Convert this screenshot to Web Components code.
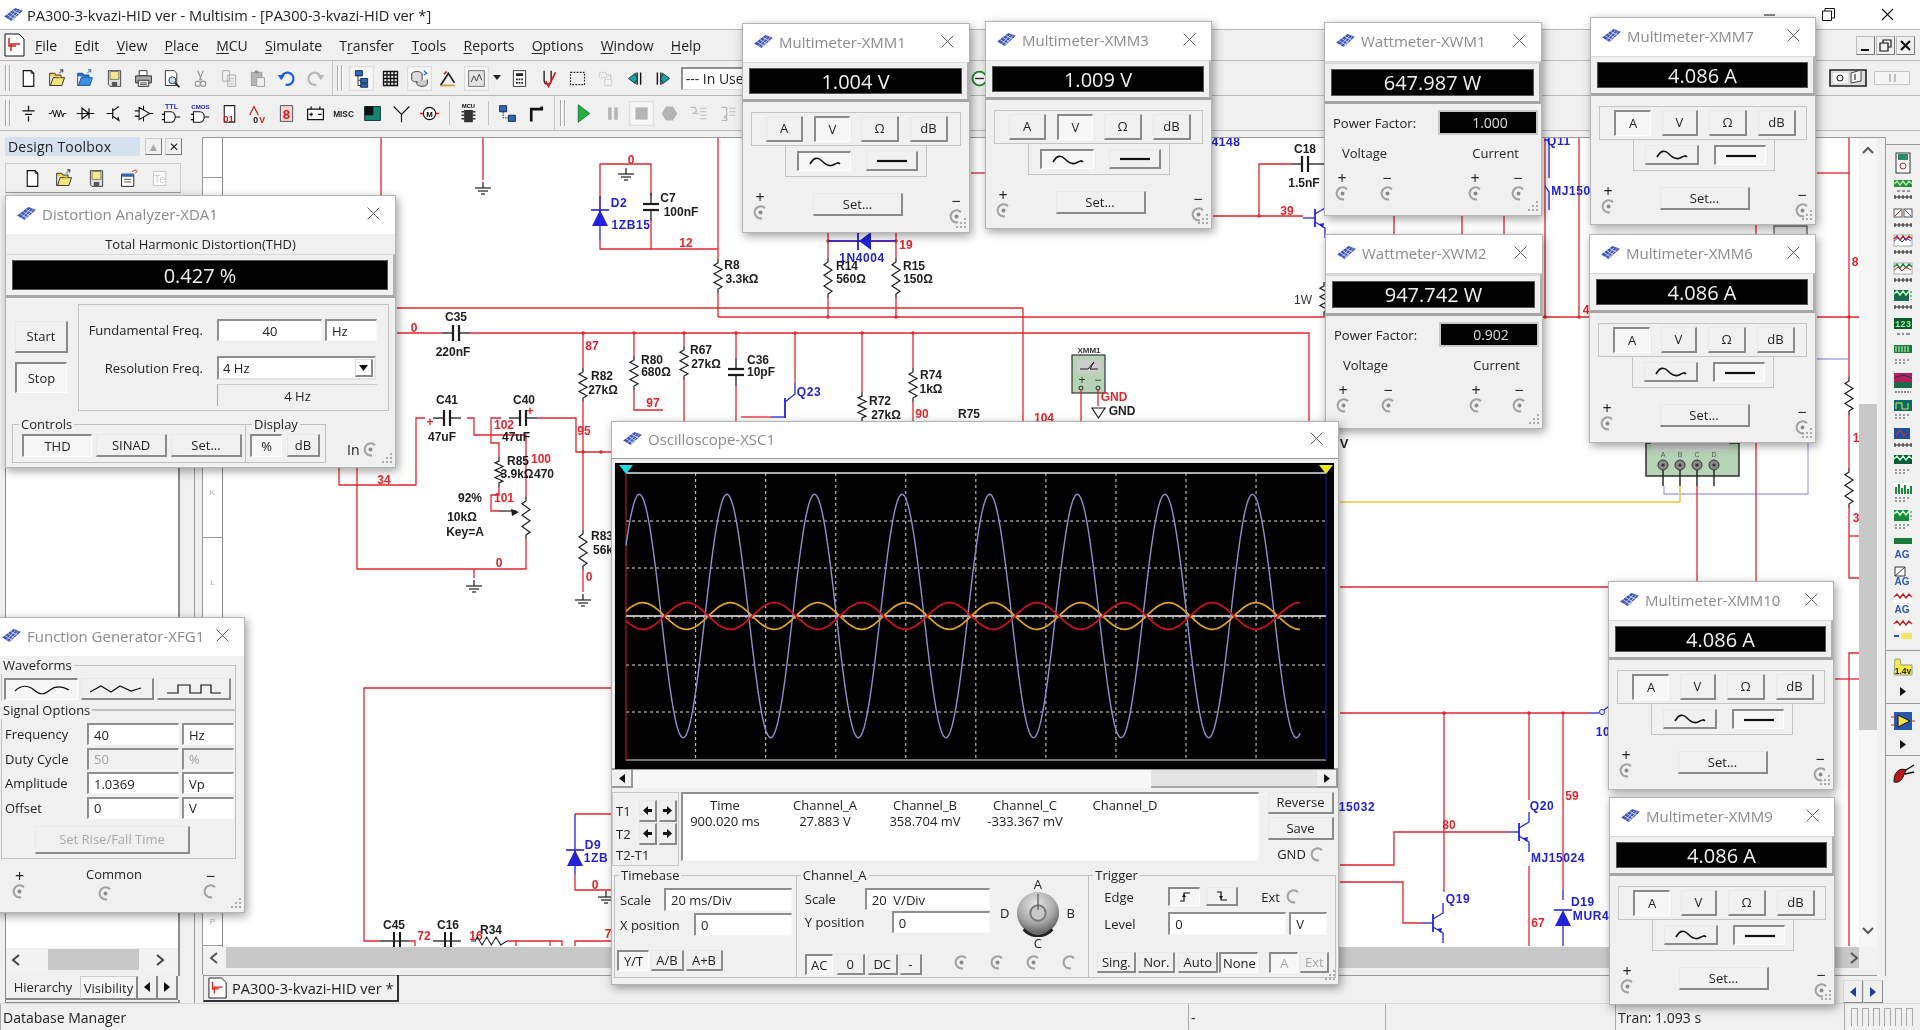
<!DOCTYPE html>
<html lang="en">
<head>
<meta charset="utf-8">
<title>Multisim</title>
<style>
  html, body { margin: 0; padding: 0; background: #f0f0f0; overflow: hidden; }
  body { font-family: "Open Sans", "Noto Sans", sans-serif; font-size: 13px; color: #222; }
</style>
</head>
<body>
<ms-app>
  <ms-titlebar text="PA300-3-kvazi-HID ver - Multisim - [PA300-3-kvazi-HID ver *]"></ms-titlebar>
  <ms-menubar></ms-menubar>
  <ms-toolbar-main></ms-toolbar-main>
  <ms-toolbar-parts></ms-toolbar-parts>
  <ms-main></ms-main>
  <ms-tabs></ms-tabs>
  <ms-statusbar></ms-statusbar>

  <ms-distortion x="5" y="195" w="391" h="273" name="Distortion Analyzer-XDA1"></ms-distortion>
  <ms-funcgen x="-5" y="617" w="250" h="296" name="Function Generator-XFG1"></ms-funcgen>
  <ms-multimeter x="742" y="23" w="228" h="210" name="Multimeter-XMM1" value="1.004 V" mode="V" cur="ac"></ms-multimeter>
  <ms-multimeter x="985" y="21" w="227" h="208" name="Multimeter-XMM3" value="1.009 V" mode="V" cur="ac"></ms-multimeter>
  <ms-wattmeter x="1324" y="22" w="218" h="194" name="Wattmeter-XWM1" value="647.987 W" pf="1.000"></ms-wattmeter>
  <ms-wattmeter x="1325" y="234" w="218" h="195" name="Wattmeter-XWM2" value="947.742 W" pf="0.902"></ms-wattmeter>
  <ms-multimeter x="1590" y="17" w="226" h="208" name="Multimeter-XMM7" value="4.086 A" mode="A" cur="dc"></ms-multimeter>
  <ms-multimeter x="1589" y="234" w="227" h="209" name="Multimeter-XMM6" value="4.086 A" mode="A" cur="dc"></ms-multimeter>
  <ms-multimeter x="1608" y="581" w="226" h="209" name="Multimeter-XMM10" value="4.086 A" mode="A" cur="dc"></ms-multimeter>
  <ms-multimeter x="1609" y="797" w="226" h="208" name="Multimeter-XMM9" value="4.086 A" mode="A" cur="dc"></ms-multimeter>
  <ms-scope x="611" y="421" w="728" h="564" name="Oscilloscope-XSC1"></ms-scope>
</ms-app>

<script>
class Base extends HTMLElement {
    constructor() {
        super();
        this.attachShadow({ mode: "open" });
    }
    connectedCallback() {
        this.shadowRoot.innerHTML = this.html();
    }
    html() { return ""; }
}

// helpers for the small controls
const btn = (t, w, h, p) => `<ms-btn style="width:${w}px;height:${h}px" ${p ? "pressed" : ""}>${t}</ms-btn>`;
const fld = (t, w, h, extra = "") => `<ms-field style="width:${w}px;height:${h}px" ${extra}>${t}</ms-field>`;
const SINE = `<svg width="32" height="12" viewBox="0 0 32 12"><path d="M1 8C5 1 9 1 13 5S20 11 24 9 29 6 31 8" fill="none" stroke="#111" stroke-width="1.6"/></svg>`;
const LINE = `<svg width="34" height="6" viewBox="0 0 34 6"><path d="M2 3H32" stroke="#111" stroke-width="2.2"/></svg>`;

class MsBtn extends Base {
    html() {
        return `<style>
:host { display: inline-flex; align-items: center; justify-content: center; box-sizing: border-box; flex: none;
  background: #f0f0f0; border-style: solid; border-width: 1px 2px 2px 1px; border-color: #e8e8e8 #8a8a8a #8a8a8a #e8e8e8;
  font-size: 13px; color: #222; line-height: 1; }
:host([pressed]) { border-width: 2px 1px 1px 2px; border-color: #8a8a8a #fff #fff #8a8a8a; background: #f6f6f6; }
:host([off]) { color: #a8a8a8; }
</style><slot></slot>`;
    }
}
customElements.define("ms-btn", MsBtn);

class MsField extends Base {
    html() {
        return `<style>
:host { display: inline-flex; align-items: center; box-sizing: border-box; flex: none; padding: 0 5px; overflow: hidden;
  background: #fff; border-style: solid; border-width: 2px 1px 1px 2px; border-color: #8f8f8f #f8f8f8 #f8f8f8 #8f8f8f;
  font-size: 13px; color: #222; white-space: nowrap; }
:host([center]) { justify-content: center; }
:host([off]) { background: #f0f0f0; color: #a0a0a0; }
</style><slot></slot>`;
    }
}
customElements.define("ms-field", MsField);

class MsTerm extends Base {
    html() {
        return `<style>:host { display: inline-block; width: 15px; height: 15px; flex: none; }</style>
<svg width="15" height="15" viewBox="0 0 15 15"><path d="M12 3.2A6 6 0 1 0 9 13.2" fill="none" stroke="#a2a2a2" stroke-width="2"/>
${this.hasAttribute("empty") ? "" : '<circle cx="7.5" cy="7.5" r="2" fill="#8a8a8a"/>'}</svg>`;
    }
}
customElements.define("ms-term", MsTerm);

class MsGroup extends Base {
    html() {
        return `<style>
:host { display: block; position: relative; box-sizing: border-box; border: 1px solid #c0c0c0; }
.leg { position: absolute; left: var(--leg-x, 6px); top: -10px; background: #f0f0f0; padding: 0 2px; font-size: 13px; line-height: 18px; white-space: nowrap; }
</style><div class="leg">${this.getAttribute("label") ?? ""}</div><slot></slot>`;
    }
}
customElements.define("ms-group", MsGroup);

class MsDisplay extends Base {
    html() {
        return `<style>
:host { display: block; box-sizing: border-box; padding: 5px 5px 5px 6px; border-top: 1px solid #d8d8d8; border-bottom: 3px solid #a6a6a6; border-right: 2px solid #b0b0b0; flex: none; }
.b { height: 100%; background: #000; color: #f2f2f2; display: flex; align-items: center; justify-content: center; font-size: 20px; border: 1px solid #555; box-sizing: border-box; }
</style><div class="b"><slot></slot></div>`;
    }
}
customElements.define("ms-display", MsDisplay);

/* ---------- toolbar icons ---------- */
const ICONS = {
    new: `<path d="M6 3H15L18 6V21H6Z" fill="#fff" stroke="#111" stroke-width="1.3"/><path d="M15 3V6H18" fill="none" stroke="#111"/>`,
    open: `<path d="M3 9V20H17L20 11H7L4 20" fill="#f5e27a" stroke="#222"/><path d="M3 9V6H9L10 8H16V11" fill="#f0d040" stroke="#222"/><path d="M14 6L18 2M15 2H18V5" fill="none" stroke="#222"/>`,
    openb: `<path d="M3 9V20H17L20 11H7L4 20" fill="#3a8fe0" stroke="#1a4f90"/><path d="M3 9V6H9L10 8H16V11" fill="#2070c8" stroke="#1a4f90"/><path d="M14 6L18 2M15 2H18V5" fill="none" stroke="#1a4f90"/>`,
    save: `<path d="M5 3H19V21H7L5 19Z" fill="#ddd" stroke="#333"/><path d="M7 4H17V13H7Z" fill="#f6e98a" stroke="#777"/><path d="M9 16H15V21H9Z" fill="#555"/>`,
    print: `<path d="M7 3H16V9H7Z" fill="#fff" stroke="#222"/><path d="M3 9H21V17H3Z" fill="#aaa" stroke="#222"/><path d="M6 14H18V21H6Z" fill="#eee" stroke="#222"/><path d="M8 17H16M8 19H16" stroke="#444"/>`,
    preview: `<path d="M5 3H15L18 6V20H5Z" fill="#fff" stroke="#222"/><circle cx="13" cy="14" r="4" fill="#bfe0f5" stroke="#222"/><path d="M16 17L21 22" stroke="#222" stroke-width="2"/>`,
    cut: `<path d="M9 3L13 14M15 3L11 14" stroke="#9a9a9a" stroke-width="1.4" fill="none"/><circle cx="9" cy="18" r="3" fill="none" stroke="#9a9a9a" stroke-width="1.4"/><circle cx="15" cy="18" r="3" fill="none" stroke="#9a9a9a" stroke-width="1.4"/>`,
    copy: `<path d="M4 3H12V15H4ZM10 8H19V21H10Z" fill="#eee" stroke="#a8a8a8"/><path d="M12 12H17M12 15H17M12 18H17" stroke="#bbb"/>`,
    paste: `<path d="M5 5H17V20H5Z" fill="#b4b4b4" stroke="#999"/><path d="M9 3H13V6H9Z" fill="#888"/><path d="M11 11H20V21H11Z" fill="#eee" stroke="#999"/>`,
    undo: `<path d="M6 12A7 7 0 1 1 11 19" fill="none" stroke="#1a5fe0" stroke-width="2.6"/><path d="M2 8H10L6 14Z" fill="#1a5fe0"/>`,
    redo: `<path d="M18 12A7 7 0 1 0 13 19" fill="none" stroke="#b8b8b8" stroke-width="2.6"/><path d="M22 8H14L18 14Z" fill="#b8b8b8"/>`,
    tree: `<path d="M5 3H13V9H5ZM11 12H19V17H11ZM11 18H19V22H11Z" fill="#2f66c0" stroke="#123"/><path d="M8 9V20H11M8 14H11" fill="none" stroke="#222"/>`,
    grid: `<path d="M4 4H20V20H4ZM4 8H20M4 12H20M4 16H20M8 4V20M12 4V20M16 4V20" fill="none" stroke="#111" stroke-width="1.5"/>`,
    db: `<ellipse cx="9" cy="7" rx="6" ry="3" fill="#ddd" stroke="#333"/><path d="M3 7V13A6 3 0 0 0 15 13V7" fill="#ddd" stroke="#333"/><path d="M9 15V18A6 3 0 0 0 21 18V13" fill="#ccc" stroke="#333"/><path d="M17 3L20 6L17 8" fill="none" stroke="#2060c0" stroke-width="1.4"/>`,
    post: `<path d="M4 20L13 6L20 17" fill="none" stroke="#222" stroke-width="2"/><path d="M4 19H20V21H4Z" fill="#c9a02a"/><path d="M8 7L11 4" stroke="#c02020" stroke-width="2"/>`,
    graph: `<path d="M3 3H21V21H3Z" fill="#e4e4e4" stroke="#666"/><path d="M6 16L9 9L12 15L15 7L18 14" fill="none" stroke="#333"/>`,
    calc: `<path d="M5 3H19V21H5Z" fill="#fff" stroke="#222"/><path d="M8 6H16V9H8ZM8 12H10V14H8ZM11 12H13V14H11ZM14 12H16V14H14ZM8 16H10V18H8ZM11 16H13V18H11ZM14 16H16V18H14Z" fill="#222"/>`,
    erc: `<path d="M7 3V14C7 20 15 20 15 14V3" fill="none" stroke="#222" stroke-width="1.6"/><path d="M9 15L12 21L20 5" fill="none" stroke="#e01818" stroke-width="2"/>`,
    dash: `<path d="M4 5H20V19H4Z" fill="none" stroke="#222" stroke-dasharray="2 1.5" stroke-width="1.3"/>`,
    cross: `<path d="M5 5H13V11H5ZM11 13H19V20H11Z" fill="none" stroke="#bbb" stroke-dasharray="2 1"/><path d="M14 8H18V12" fill="none" stroke="#bbb"/>`,
    back: `<path d="M15 5V19M19 5V19" stroke="#111" stroke-width="1.6"/><path d="M13 6L5 12L13 18V15H15V9H13Z" fill="#1aa0a0" stroke="#134"/>`,
    fwd: `<path d="M5 5V19M9 5V19" stroke="#111" stroke-width="1.6"/><path d="M11 6L19 12L11 18V15H9V9H11Z" fill="#1aa0a0" stroke="#134"/>`,
    source: `<path d="M12 3V9M12 15V21M5 9H19M8 13H16" stroke="#111" stroke-width="1.4" fill="none"/>`,
    basic: `<path d="M2 12H5L6.5 8L9 16L11 8L13.5 16L15.5 8L18 16L19 12H22" fill="none" stroke="#111" stroke-width="1.1"/>`,
    diode: `<path d="M2 12H22M8 6V18L16 12ZM16 6V18" fill="none" stroke="#111" stroke-width="1.4"/>`,
    trans: `<path d="M10 6V18M3 12H10M10 9L17 4M10 15L17 20M13 17L17 20L16 16" fill="none" stroke="#111" stroke-width="1.4"/>`,
    analog: `<path d="M7 5V19L19 12ZM2 9H7M2 15H7M19 12H23M12 3V8M12 16V21" fill="none" stroke="#111" stroke-width="1.2"/>`,
    ttl: `<path d="M4 10H11C18 10 18 22 11 22H4ZM1 13H4M1 19H4M16 16H22" fill="#fff" stroke="#111" stroke-width="1.2"/><text x="12" y="7" font-size="8" text-anchor="middle" font-family="Liberation Sans" font-weight="700" fill="#2323c8">TTL</text>`,
    cmos: `<path d="M4 10H11C18 10 18 22 11 22H4ZM1 13H4M1 19H4M16 16H22" fill="#fff" stroke="#111" stroke-width="1.2"/><text x="12" y="7" font-size="7" text-anchor="middle" font-family="Liberation Sans" font-weight="700" fill="#2323c8">CMOS</text>`,
    misc: `<path d="M6 3H18V22H6Z" fill="#fff" stroke="#222" stroke-width="1.3"/><text x="11" y="22" font-size="11" text-anchor="middle" font-family="Liberation Sans" font-weight="700" fill="#d01818">01</text>`,
    mixed: `<path d="M3 14L8 4L13 14" fill="none" stroke="#d01818" stroke-width="1.4"/><text x="7" y="23" font-size="10" font-family="Liberation Sans" font-weight="700" fill="#111">0</text><text x="14" y="23" font-size="10" font-family="Liberation Sans" font-weight="700" fill="#d01818">V</text>`,
    seg: `<path d="M5 3H19V21H5Z" fill="#f8d8d8" stroke="#444"/><text x="12" y="18" font-size="15" text-anchor="middle" font-family="Liberation Mono" font-weight="700" fill="#d01818">8</text>`,
    power: `<path d="M3 7H21V19H3Z" fill="#fff" stroke="#111" stroke-width="1.4"/><path d="M7 7V4M17 7V4M7 11V15M5 13H9M15 13H19" stroke="#111" stroke-width="1.4"/>`,
    misctxt: `<text x="12" y="16" font-size="9.5" text-anchor="middle" font-family="Liberation Sans" font-weight="700" fill="#222">MISC</text>`,
    adv: `<path d="M3 4H21V20H3Z" fill="#14866e" stroke="#123"/><path d="M3 4H13V14H3Z" fill="#111"/>`,
    rf: `<path d="M3 4L12 13L21 4M12 13V22" fill="none" stroke="#111" stroke-width="1.3"/>`,
    motor: `<circle cx="12" cy="12" r="7" fill="#fff" stroke="#111" stroke-width="1.3"/><path d="M1 12H5M19 12H23" stroke="#d01818" stroke-width="1.6"/><text x="12" y="15.5" font-size="9" text-anchor="middle" font-family="Liberation Sans" font-weight="700">M</text>`,
    mcu: `<path d="M7 8H17V22H7Z" fill="#333"/><path d="M4 10H7M4 14H7M4 18H7M17 10H20M17 14H20M17 18H20" stroke="#333" stroke-width="1.6"/><text x="12" y="6" font-size="6.5" text-anchor="middle" font-family="Liberation Sans" font-weight="700">MCU</text>`,
    hier: `<path d="M3 3H11V10H3ZM13 14H21V21H13Z" fill="#2f66c0" stroke="#123"/><path d="M7 10V17H13" fill="none" stroke="#222" stroke-dasharray="2 1"/>`,
    connector: `<path d="M6 21V7H18V4" fill="none" stroke="#111" stroke-width="3"/>`,
    run: `<path d="M6 2L19 12L6 22Z" fill="#22b040" stroke="#127028"/>`,
    pause: `<path d="M7 5H11V19H7ZM14 5H18V19H14Z" fill="#b4b4b4"/>`,
    stop: `<path d="M5 5H19V19H5Z" fill="#b4b4b4"/>`,
    probe: `<path d="M8 4H16L21 12L16 20H8L3 12Z" fill="#b4b4b4"/>`,
    step1: `<path d="M3 5H8L10 9L6 12H12M14 6H21M14 10H21M14 14H21M14 18H21" fill="none" stroke="#bbb" stroke-width="1.4"/>`,
    step2: `<path d="M5 5H11V20H5M12 12L8 16L12 19M14 6H21M14 10H21M14 14H21" fill="none" stroke="#bbb" stroke-width="1.4"/>`,
    minus: `<circle cx="12" cy="12" r="8" fill="#fff" stroke="#1b8a30" stroke-width="2"/><path d="M7 12H17" stroke="#222" stroke-width="1.5"/>`,
    tcol: `<path d="M4 4H18V20H4Z" fill="#fff" stroke="#c0c0c0"/><text x="11" y="17" font-size="13" text-anchor="middle" font-family="Liberation Sans" fill="#c8c8c8">Te</text>`,
    win: `<path d="M4 7H18V21H4Z" fill="#fff" stroke="#111"/><path d="M4 7H18V10H4Z" fill="#2f66c0"/><path d="M7 13H15M7 16H15" stroke="#444"/><path d="M16 4L21 2M20 6L22 3" stroke="#d01818"/>`
};

class MsIcon extends Base {
    html() {
        const s = this.getAttribute("size") ?? 21;
        return `<style>:host { display: inline-flex; align-items: center; justify-content: center; width: var(--slot, 28.7px); height: 26px; flex: none; }
:host([boxed]) svg { background: #f6f6f6; outline: 1px solid #ddd; outline-offset: 1px; }</style>
<svg width="${s}" height="${s}" viewBox="0 0 24 24">${ICONS[this.getAttribute("name")] ?? ""}</svg>`;
    }
}
customElements.define("ms-icon", MsIcon);

const icons = list => list.split(" ").map(n => n.startsWith("!") ? `<ms-icon name="${n.slice(1)}" boxed></ms-icon>` : `<ms-icon name="${n}"></ms-icon>`).join("");

/* ---------- shell ---------- */
class MsApp extends Base {
    html() {
        return `<style>:host { display: flex; flex-direction: column; position: relative; width: 1920px; height: 1030px; overflow: hidden; background: #f0f0f0; filter: blur(.35px); }</style><slot></slot>`;
    }
}
customElements.define("ms-app", MsApp);

const LOGO = `<svg width="21" height="15" viewBox="0 0 22 16"><path d="M1 10L13 1L21 4L9 15Z" fill="#3f56b8"/><path d="M4 8L12 13M7 5.8L15 11M10 3.5L18 8M6 12.5L15 3M9 14L18 3.6" stroke="#e8ecff" stroke-width=".8"/></svg>`;

class MsTitlebar extends Base {
    html() {
        return `<style>
:host { display: flex; align-items: center; height: 29px; background: #fff; border-bottom: 1px solid #b8b8b8; flex: none; font-size: 14.6px; color: #222; }
.logo { display: flex; width: 27px; padding-left: 3px; box-sizing: border-box; }
.ctl { margin-left: auto; display: flex; padding-right: 3px; }
.ctl div { width: 59px; display: flex; align-items: center; justify-content: center; height: 29px; }
</style><div class="logo">${LOGO}</div><span>${this.getAttribute("text")}</span>
<div class="ctl">
<div><svg width="12" height="12"><path d="M0 6H11" stroke="#111"/></svg></div>
<div><svg width="13" height="13"><path d="M.5 3H9.5V12.5H.5ZM3 3V.5H12.5V10H9.5" fill="none" stroke="#111"/></svg></div>
<div><svg width="13" height="13"><path d="M1 1L12 12M12 1L1 12" stroke="#111" stroke-width="1.1"/></svg></div>
</div>`;
    }
}
customElements.define("ms-titlebar", MsTitlebar);

class MsMenubar extends Base {
    html() {
        const items = [["F", "ile"], ["E", "dit"], ["V", "iew"], ["P", "lace"], ["M", "CU"], ["S", "imulate"],
            ["Tr", "ansfer", 1], ["T", "ools"], ["R", "eports"], ["O", "ptions"], ["W", "indow"], ["H", "elp"]];
        const html = items.map(i => i[2] ? `<span>T<u>r</u>ansfer</span>` : `<span><u>${i[0]}</u>${i[1]}</span>`).join("");
        const doc = `<svg width="22" height="24" viewBox="0 0 22 24"><path d="M1 1H15L20 6V23H1Z" fill="#fff" stroke="#111"/><path d="M5 5V13H12M16 11H7V18" fill="none" stroke="#d02020" stroke-width="1.5"/></svg>`;
        return `<style>
:host { display: flex; align-items: center; height: 30px; padding-left: 4px; border-bottom: 1px solid #b8b8b8; flex: none; font-size: 14px; color: #222; }
.doc { display: flex; width: 31px; }
nav { display: flex; gap: 17.3px; }
u { text-underline-offset: 2px; }
.mdi { margin-left: auto; display: flex; gap: 1px; padding-right: 5px; }
.mdi div { width: 19px; height: 19px; box-sizing: border-box; border: 1px solid #bbb; border-right-color: #777; border-bottom-color: #777; display: flex; align-items: center; justify-content: center; }
</style><div class="doc">${doc}</div><nav>${html}</nav>
<div class="mdi">
<div><svg width="13" height="13"><path d="M2 11H10" stroke="#111" stroke-width="2"/></svg></div>
<div><svg width="13" height="13"><path d="M1 4H9V12H1ZM4 4V1H12V8H9" fill="none" stroke="#111" stroke-width="1.2"/></svg></div>
<div><svg width="13" height="13"><path d="M2 2L11 11M11 2L2 11" stroke="#111" stroke-width="2.2"/></svg></div>
</div>`;
    }
}
customElements.define("ms-menubar", MsMenubar);

const GRIP = `<svg width="8" height="28" style="flex:none"><path d="M1.5 1V27M5.5 1V27" stroke="#a8a8a8"/><path d="M2.5 1V27M6.5 1V27" stroke="#fff"/></svg>`;

class MsToolbarMain extends Base {
    html() {
        return `<style>
:host { display: flex; align-items: center; height: 34px; padding-left: 4px; border-bottom: 1px solid #b8b8b8; flex: none; }
.gap { width: 2px; flex: none; }
.sep { display: flex; align-items: center; height: 100%; padding: 0 4px 0 3px; border-left: 1px solid #c4c4c4; margin-left: 2px; }
.combo { width: 285px; height: 23px; margin: 0 0 0 3px; box-sizing: border-box; background: #fff; border: 2px solid #8f8f8f; border-right: 0; border-bottom: 1px solid #ddd; font-size: 14px; padding-left: 3px; line-height: 19px; white-space: nowrap; overflow: hidden; flex: none; }
.right { margin-left: auto; display: flex; gap: 7px; padding-right: 10px; align-items: center; }
</style>${GRIP}<div class="gap"></div>${icons("new open openb save print preview cut copy paste undo redo")}
<div class="sep">${GRIP}</div>${icons("!tree grid !db post !graph")}
<svg width="8" height="6" style="margin:0 4.500px 0 2px;flex:none"><path d="M0 0H8L4 5Z" fill="#222"/></svg>
${icons("calc erc dash cross back fwd")}
<div class="combo">--- In Use List ---</div>${icons("minus")}
<div class="right">
<svg width="38" height="18" viewBox="0 0 38 18"><path d="M1 1H37V17H1Z" fill="#ddd" stroke="#222" stroke-width="1.6"/><path d="M4 4H19V14H4Z" fill="#fff"/><circle cx="11" cy="9" r="3" fill="none" stroke="#111"/><path d="M22 14V4L32 1V12Z" fill="#f4f4f4" stroke="#444"/><path d="M26 5V11" stroke="#111"/></svg>
<svg width="36" height="14" viewBox="0 0 36 14"><path d="M.5 .5H35.5V13.5H.5Z" fill="#f4f4f4" stroke="#c4c4c4"/><path d="M16 3V11M21 3V11" stroke="#bbb" stroke-width="2"/></svg>
</div>`;
    }
}
customElements.define("ms-toolbar-main", MsToolbarMain);

class MsToolbarParts extends Base {
    html() {
        return `<style>
:host { display: flex; align-items: center; height: 34px; padding-left: 4px; border-bottom: 1px solid #b8b8b8; flex: none; }
.gap { width: 2px; flex: none; }
.sep { width: 1px; height: 24px; background: #c0c0c0; margin: 0 4.500px; flex: none; }
.edge { width: 1px; height: 100%; background: #c4c4c4; margin: 0 4px 0 4px; }
</style>${GRIP}<div class="gap"></div>${icons("source basic diode trans analog ttl cmos misc mixed seg power misctxt adv rf motor")}
<div class="sep"></div>${icons("mcu")}<div class="sep"></div>${icons("hier connector")}
<div class="edge"></div>${GRIP}<div class="gap"></div>${icons("run pause !stop probe step1 step2")}`;
    }
}
customElements.define("ms-toolbar-parts", MsToolbarParts);

class MsMain extends Base {
    html() {
        return `<style>:host { display: flex; flex: 1; min-height: 0; padding-top: 6px; }</style>
<ms-toolbox></ms-toolbox><ms-workspace></ms-workspace><ms-rightbar></ms-rightbar>`;
    }
}
customElements.define("ms-main", MsMain);

class MsToolbox extends Base {
    html() {
        return `<style>
/* the panel runs down past the workspace, next to the document tabs */
:host { display: flex; flex-direction: column; width: 202px; flex: none; padding-left: 5px; box-sizing: border-box; margin-bottom: -28px; z-index: 1; }
.head { display: flex; align-items: center; gap: 3px; height: 19px; flex: none; }
.head b { font-weight: 400; font-size: 14px; background: #d5e1ef; width: 135px; height: 19px; line-height: 19px; padding-left: 3px; box-sizing: border-box; margin-right: 2px; white-space: nowrap; letter-spacing: .2px; }
.head span { width: 17px; height: 17px; box-sizing: border-box; border: 1px solid #ccc; border-right-color: #777; border-bottom-color: #777; font-size: 12px; display: flex; align-items: center; justify-content: center; }
.tools { display: flex; height: 30px; margin: 7px 0 0; width: 176px; box-sizing: border-box; border: 1px solid #ccc; border-bottom-color: #999; align-items: center; padding-left: 10px; --slot: 32px; flex: none; }
.body { flex: 1; display: flex; min-height: 0; margin-top: 3px; }
.tree { width: 175px; display: flex; flex-direction: column; border-right: 2px solid #8c8c8c; border-left: 1px solid #8c8c8c; box-sizing: border-box; border-bottom: 1px solid #8c8c8c; }
.white { flex: 1; background: #fff; }
.scroll { height: 21px; display: flex; align-items: center; background: #f2f2f2; font-size: 18px; color: #444; flex: none; margin-bottom: 6px; border-top: 1px solid #eee; }
.scroll i { width: 91px; height: 100%; background: #c8c8c8; margin: 0 12px 0 24px; }
.scroll span { width: 18px; padding-left: 5px; box-sizing: border-box; display: flex; }
.tabs { display: flex; height: 24px; flex: none; margin: 0 -22px 2px 0; font-size: 13px; align-items: center; background: #f0f0f0; }
.tabs div { height: 100%; display: flex; align-items: center; justify-content: center; box-sizing: border-box; }
.h { width: 74px; border-bottom: 2px solid #888; }
.v { width: 58px; background: #f6f6f6; border: 1px solid #ccc; border-right: 2px solid #888; border-bottom: 2px solid #888; }
.a { width: 20px; border-right: 2px solid #888; border-bottom: 2px solid #888; }
.rail { width: 14px; border-right: 1px solid #9a9a9a; flex: none; }
</style>
<div class="head"><b>Design Toolbox</b><span style="color:#aaa">▲</span><span>✕</span></div>
<div class="tools">${icons("new open save win tcol")}</div>
<div class="body"><div class="tree"><div class="white"></div>
<div class="scroll"><span><svg width="9" height="12"><path d="M8 1L2 6L8 11" fill="none" stroke="#444" stroke-width="2"/></svg></span><i></i><span><svg width="9" height="12"><path d="M1 1L7 6L1 11" fill="none" stroke="#444" stroke-width="2"/></svg></span></div>
<div class="tabs"><div class="h">Hierarchy</div><div class="v">Visibility</div>
<div class="a"><svg width="8" height="10"><path d="M7 0V10L1 5Z" fill="#111"/></svg></div><div class="a"><svg width="8" height="10"><path d="M1 0V10L7 5Z" fill="#111"/></svg></div></div>
</div><div class="rail"></div></div>`;
    }
}
customElements.define("ms-toolbox", MsToolbox);

class MsWorkspace extends Base {
    html() {
        const ruler = [[40, ""], [90, ""], [90, ""], [90, ""], [90, "K"], [90, "L"], [90, ""], [90, ""], [90, ""], [48, "P"]]
            .map(c => `<div style="height:${c[0]}px">${c[1]}</div>`).join("");
        return `<style>
:host { display: grid; grid-template-columns: 20px 1fr 18px 9px; grid-template-rows: 809px 21px 8px; flex: 1; min-width: 0; border-left: 1px solid #9a9a9a; border-top: 1px solid #9a9a9a; box-sizing: border-box; }
.ruler { background: #fff; border-right: 1px solid #888; display: flex; flex-direction: column; font: 8px "Liberation Sans", sans-serif; color: #aaa; overflow: hidden; }
.ruler div { display: flex; align-items: center; justify-content: center; border-bottom: 1px solid #999; flex: none; box-sizing: border-box; }
.v { background: #f6f6f6; display: flex; flex-direction: column; align-items: center; grid-row: 1; grid-column: 3; }
.v i { background: #c8c8c8; height: 326px; width: 100%; margin-top: 249px; }
.v svg { flex: none; }
.h { grid-column: 1 / 3; grid-row: 2; background: #f2f2f2; display: flex; align-items: center; padding-left: 6px; box-sizing: border-box; gap: 8px; }
.h i { flex: 1; background: #c8c8c8; height: 100%; }
.cor { grid-row: 2; grid-column: 3; display: flex; align-items: center; padding-left: 2px; background: #f2f2f2; }
.m { grid-column: 4; grid-row: 1 / 4; border-right: 1px solid #9a9a9a; }
.b { grid-column: 1 / 4; grid-row: 3; border-bottom: 1px solid #9a9a9a; }
</style>
<div class="ruler">${ruler}</div><ms-schematic></ms-schematic>
<div class="v"><svg width="12" height="9" style="margin-top:8px"><path d="M1 7L6 2L11 7" fill="none" stroke="#555" stroke-width="2"/></svg><i></i>
<svg width="12" height="9" style="margin-top:196px"><path d="M1 2L6 7L11 2" fill="none" stroke="#555" stroke-width="2"/></svg></div><div class="m"></div>
<div class="h"><svg width="9" height="12"><path d="M8 1L2 6L8 11" fill="none" stroke="#555" stroke-width="2"/></svg><i></i></div>
<div class="cor"><svg width="9" height="12" style="margin-left:-11px"><path d="M1 1L7 6L1 11" fill="none" stroke="#555" stroke-width="2"/></svg></div><div class="b"></div>`;
    }
}
customElements.define("ms-workspace", MsWorkspace);

/* ---------- schematic canvas, drawn in page coordinates ---------- */
class MsSchematic extends Base {
    html() {
        const red = "#e4252c", blue = "#2222dd", blk = "#1c1c1c";
        const P = (pts, c = red, w = 1.3) => `<polyline points="${pts}" fill="none" stroke="${c}" stroke-width="${w}"/>`;
        const T = (x, y, s, c = "k") => `<text x="${x}" y="${y + 4}" class="${c}">${s}</text>`;
        const dot = (x, y) => `<circle cx="${x}" cy="${y}" r="1.8" fill="${red}"/>`;
        const rv = (x, y, h = 32) => {
            const st = (h - 8) / 6;
            let p = `${x},${y} ${x},${y + 4} `;
            for (let i = 0; i < 6; i++) p += `${x + (i % 2 ? 4 : -4)},${y + 4 + st * i + st / 2} `;
            return P(p + `${x},${y + h - 4} ${x},${y + h}`, blk, 1.2);
        };
        const rh = (x, y, w = 26) => {
            const st = (w - 8) / 6;
            let p = `${x},${y} ${x + 4},${y} `;
            for (let i = 0; i < 6; i++) p += `${x + 4 + st * i + st / 2},${y + (i % 2 ? 4 : -4)} `;
            return P(p + `${x + w},${y}`, blk, 1.1);
        };
        const ch = (x, y) => P(`${x - 14},${y} ${x - 3},${y}`, blk) + P(`${x + 3},${y} ${x + 14},${y}`, blk) + P(`${x - 3},${y - 8} ${x - 3},${y + 8}`, blk, 2.2) + P(`${x + 3},${y - 8} ${x + 3},${y + 8}`, blk, 2.2);
        const cv = (x, y) => P(`${x},${y - 14} ${x},${y - 3}`, blk) + P(`${x},${y + 3} ${x},${y + 14}`, blk) + P(`${x - 8},${y - 3} ${x + 8},${y - 3}`, blk, 2.2) + P(`${x - 8},${y + 3} ${x + 8},${y + 3}`, blk, 2.2);
        const gnd = (x, y) => P(`${x},${y - 6} ${x},${y}`, blk, 1.2) + P(`${x - 8},${y} ${x + 8},${y}`, blk, 1.2) + P(`${x - 5},${y + 3} ${x + 5},${y + 3}`, blk, 1.2) + P(`${x - 2},${y + 6} ${x + 2},${y + 6}`, blk, 1.2);
        const q = (x, y) => P(`${x - 12},${y} ${x},${y}`, blue) + P(`${x},${y - 9} ${x},${y + 9}`, blue, 1.8) + P(`${x},${y - 4} ${x + 10},${y - 10} ${x + 10},${y - 20}`, blue) + P(`${x},${y + 4} ${x + 10},${y + 10} ${x + 10},${y + 20}`, blue) + `<path d="M${x + 4},${y + 6} L${x + 9},${y + 5} L${x + 8},${y + 10}Z" fill="${blue}"/>`;
        const dz = (x, y, s = 8) => `<path d="M${x - s},${y + s} H${x + s} L${x},${y - s}Z" fill="${blue}"/>` + P(`${x - s - 1},${y - s} ${x + s + 1},${y - s}`, blue, 1.6);

        let s = "";
        // top-left part
        s += P("380,138 380,196") + P("482,138 482,180") + gnd(482, 188);
        s += P("599,214 599,164 650,164 650,196") + gnd(625, 174) + cv(650, 207) + P("650,221 650,249");
        s += dz(599, 218, 8) + P("599,196 599,240", blue) + P("599,240 599,249 717,249");
        s += P("717,138 717,259") + rv(717, 259, 34) + P("717,293 717,317");
        s += T(630, 160, "0", "r") + T(618, 203, "D2", "b") + T(630, 225, "1ZB15", "b") + T(667, 198, "C7") + T(680, 212, "100nF") + T(685, 243, "12", "r");
        s += T(731, 265, "R8") + T(741, 279, "3.3kΩ");
        // main rails
        s += P("396,308 1022,308") + P("1022,308 1022,424") + P("717,317 1590,317");
        s += P("396,333 441,333") + ch(455, 333) + P("469,333 1308,333 1308,424");
        s += T(455, 317, "C35") + T(452, 352, "220nF") + T(413, 328, "0", "r");
        // branches off the rail
        s += dot(582, 333) + P("582,333 582,368") + rv(582, 368, 34) + P("582,402 582,530") + rv(582, 530, 40) + P("582,570 582,592") + gnd(582, 600);
        s += T(591, 346, "87", "r") + T(601, 376, "R82") + T(602, 390, "27kΩ") + T(583, 431, "95", "r") + T(601, 536, "R83") + T(602, 550, "56k") + T(588, 577, "0", "r");
        s += dot(633, 333) + P("633,333 633,356") + rv(633, 356, 34) + P("633,390 633,410 662,410");
        s += dot(683, 333) + P("683,333 683,346") + rv(683, 346, 34) + P("683,380 683,424");
        s += dot(735, 333) + P("735,333 735,358") + cv(735, 372) + P("735,386 735,424");
        s += T(651, 360, "R80") + T(655, 372, "680Ω") + T(700, 350, "R67") + T(705, 364, "27kΩ") + T(757, 360, "C36") + T(760, 372, "10pF") + T(652, 403, "97", "r");
        s += dot(794, 333) + P("794,333 794,383") + P("794,383 794,394 784,402", blue) + P("784,398 784,418", blue, 1.8) + P("740,417 770,417") + P("770,417 784,417", blue) + T(808, 392, "Q23", "b");
        s += dot(861, 333) + P("861,333 861,392") + rv(861, 392, 30);
        s += dot(912, 333) + P("912,333 912,368") + rv(912, 368, 34) + P("912,402 912,424");
        s += T(879, 401, "R72") + T(885, 415, "27kΩ") + T(930, 375, "R74") + T(930, 389, "1kΩ") + T(921, 414, "90", "r") + T(968, 414, "R75") + T(1043, 418, "104", "r");
        // diode row under the meters
        s += P("827,233 827,241 895,241 895,233") + dot(827, 241) + dot(895, 241) + P("827,241 895,241", blue) + `<path d="M870,232 V250 L858,241Z" fill="${blue}"/>` + P("857,232 857,250", blue, 1.8);
        s += T(905, 245, "19", "r") + T(861, 258, "1N4004", "b");
        s += P("827,241 827,258") + rv(827, 258, 40) + P("827,298 827,317") + dot(827, 317);
        s += P("895,241 895,258") + rv(895, 258, 40) + P("895,298 895,317") + dot(895, 317);
        s += T(846, 266, "R14") + T(850, 279, "560Ω") + T(913, 266, "R15") + T(917, 279, "150Ω");
        s += P("970,173 985,173");
        // C18 and driver
        s += P("1212,216 1302,216") + dot(1258, 216) + P("1258,216 1258,164 1290,164") + ch(1304, 164) + P("1318,164 1324,164", blk);
        s += q(1314, 218) + T(1286, 211, "39", "r") + T(1304, 149, "C18") + T(1303, 183, "1.5nF") + T(1225, 142, "4148", "b");
        s += T(1302, 300, "1W", "n") + rv(1323, 282, 34);
        // meter probe
        s += `<rect x="1071" y="355" width="33" height="38" fill="#b5d3b5" stroke="#333" stroke-width="1.2"/><rect x="1076" y="360" width="24" height="13" fill="#ccc"/>`;
        s += P("1079,369 1087,369 1093,362 1089,369 1097,369", blk, 1) + T(1081, 380, "+", "n") + T(1097, 380, "−", "n");
        s += `<circle cx="1080" cy="388" r="2" fill="none" stroke="#222"/><circle cx="1097" cy="388" r="2" fill="none" stroke="#222"/>`;
        s += T(1088, 349, "XMM1", "tiny") + P("1080,390 1080,424") + P("1097,390 1097,406") + `<path d="M1091,408 H1104 L1097.500,418Z" fill="none" stroke="${blk}" stroke-width="1.2"/>`;
        s += T(1113, 397, "GND", "r") + T(1121, 411, "GND");
        // around the wattmeters
        s += P("1393,216 1393,234") + P("1461,216 1461,234") + P("1503,216 1503,234");
        s += P("1544,138 1544,317") + P("1578,138 1578,317") + T(1558, 141, "Q11", "b") + T(1570, 191, "MJ150", "b") + P("1543,140 1548,140 1548,178", blue) + P("1544,186 1548,192 1548,210", blue) + dot(1544, 317) + dot(1578, 317);
        s += T(1585, 310, "4", "r") + P("1755,225 1755,234") + `<rect x="1773" y="226" width="33" height="12" fill="#eee" stroke="#333"/>`;
        // right hand rail
        s += P("1848,138 1848,377") + P("1816,173 1848,173") + P("1816,317 1858,317") + dot(1848, 317) + P("1816,359 1848,359", "#9a9ae8") + rv(1848, 377, 38) + P("1848,415 1848,468") + rv(1848, 468, 40) + P("1848,508 1848,578 1858,578") + P("1848,536 1858,536");
        s += P("1858,653 1848,653 1848,946") + P("1834,679 1858,679");
        s += T(1854, 262, "8", "r") + T(1855, 438, "1", "r") + T(1855, 518, "3", "r") + T(1343, 444, "V", "v");
        // logic analyser block
        s += P("1663,486 1663,494 1807,494 1807,443", "#a8a8ee") + P("1679,486 1679,502 1339,502", "#f0c840", 1.6) + P("1696,486 1696,581") + P("1755,443 1755,581");
        s += `<rect x="1645" y="443" width="93" height="33" fill="#b5d3b5" stroke="#222" stroke-width="1.4"/><rect x="1650" y="443" width="78" height="8" fill="#ccc"/>`;
        for (const [x, l] of [[1662, "A"], [1679, "B"], [1696, "C"], [1713, "D"]]) {
            s += T(x, 453, l, "mini") + `<circle cx="${x}" cy="465" r="5" fill="#888" stroke="#333"/><circle cx="${x}" cy="465" r="1.600" fill="#333"/>` + P(`${x},470 ${x},486`, blk, 1.4);
        }
        // lower right transistors
        s += P("1339,587 1608,587") + P("1339,713 1588,713") + P("1588,713 1598,713", blue) + `<circle cx="1601" cy="712" r="2.500" fill="none" stroke="${blue}"/>` + P("1603,710 1608,706", blue) + T(1602, 732, "10", "b");
        s += dot(1443, 713) + P("1443,713 1443,892") + dot(1528, 713) + P("1528,713 1528,800") + dot(1562, 713) + P("1562,713 1562,890");
        s += P("1339,865 1393,865 1393,832 1506,832") + q(1518, 832) + P("1528,866 1528,946");
        s += P("1339,882 1402,882 1402,923 1420,923") + q(1432, 923);
        s += P("1562,890 1562,900", blue) + dz(1562, 918, 8) + P("1562,926 1562,946", blue);
        s += T(1356, 807, "15032", "b") + T(1448, 825, "80", "r") + T(1541, 806, "Q20", "b") + T(1571, 796, "59", "r") + T(1557, 858, "MJ15024", "b") + T(1457, 899, "Q19", "b") + T(1582, 902, "D19", "b") + T(1590, 916, "MUR4", "b") + T(1537, 923, "67", "r");
        // distortion analyser neighbours
        s += P("424,418 415,418 415,485 338,485 338,468") + ch(446, 418) + P("466,418 473,418 473,435 525,435 525,497") + T(446, 400, "C41") + T(441, 437, "47uF") + T(429, 422, "+", "r");
        s += ch(522, 418) + P("500,418 490,418 490,443 498,443 498,457") + P("536,418 575,418 575,452 611,452") + dot(582, 452) + dot(600, 452) + T(523, 400, "C40") + T(529, 411, "+", "r") + T(515, 437, "47uF") + T(503, 425, "102", "r");
        s += rv(498, 457, 30) + T(517, 461, "R85") + T(516, 474, "3.9kΩ") + T(540, 459, "100", "r") + T(543, 474, "470");
        s += P("498,487 498,495 490,495 490,511 498,511") + P("498,511 515,511", blk, 1.2) + `<path d="M510,509 L518,512 L511,516Z" fill="${blk}"/>` + rv(525, 497, 42) + P("525,539 525,569 356,569 356,468") + P("473,569 473,578") + gnd(473, 586);
        s += T(469, 498, "92%") + T(461, 517, "10kΩ") + T(464, 532, "Key=A") + T(503, 498, "101", "r") + T(383, 480, "34", "r") + T(498, 563, "0", "r");
        // lower left block
        s += P("611,688 363,688 363,941 379,941") + P("379,941 408,941", blk) + P("393,932 393,950", blk, 2) + P("399,932 399,950", blk, 2) + P("408,941 414,941 414,946") + T(423, 936, "72", "r");
        s += P("432,941 460,941", blk) + P("444,932 444,950", blk, 2) + P("450,932 450,950", blk, 2) + T(393, 925, "C45") + T(447, 925, "C16") + T(490, 930, "R34") + T(475, 936, "16", "r") + rh(470, 941, 36);
        s += P("506,941 561,941 561,946") + P("515,941 515,946") + P("549,941 549,946") + P("574,946 574,941 611,941") + T(607, 934, "7", "r");
        s += P("574,814 611,814") + P("574,814 574,875", blue) + dz(574, 858, 8) + P("574,875 574,890 611,890") + gnd(605, 897) + T(592, 845, "D9", "b") + T(595, 858, "1ZB", "b") + T(594, 885, "0", "r");
        return `<style>
:host { display: block; background: #fff; overflow: hidden; grid-row: 1; grid-column: 2; min-width: 0; }
svg { display: block; }
text { font: 700 12px "Liberation Sans", sans-serif; text-anchor: middle; }
.k { fill: ${blk}; } .r { fill: ${red}; } .b { fill: ${blue}; letter-spacing: .6px; } .n { fill: #333; font-weight: 400; }
.v { fill: #222; font-size: 13px; } .tiny { fill: #333; font-size: 8px; } .mini { fill: #555; font-size: 7px; font-weight: 400; }
</style><svg width="1637" height="809" viewBox="222 138 1637 809">${s}</svg>`;
    }
}
customElements.define("ms-schematic", MsSchematic);

/* ---------- instrument strip on the right ---------- */
class MsRightbar extends Base {
    html() {
        const wave = (c) => `<path d="M3 6L6 3L9 7L12 3L15 7L18 3L21 6" fill="none" stroke="${c}" stroke-width="1.4"/>`;
        const row = `<path d="M4 17V21M8 17V21M12 17V21M16 17V21M20 17V21" stroke="#333" stroke-width="1.2"/><path d="M3 19H21" stroke="#333"/>`;
        const dots = `<path d="M4 17H6M8 17H10M12 17H14M16 17H18M4 20H6M8 20H10M12 20H14" stroke="#444"/>`;
        const ag = `<text x="11" y="22" font-size="10" text-anchor="middle" font-family="Liberation Sans" font-weight="700" fill="#2858b0">AG</text>`;
        const I = [
            `<rect x="5" y="2" width="14" height="20" fill="#fff" stroke="#333"/><rect x="7" y="3" width="10" height="6" fill="#2a8a6a"/><circle cx="12" cy="15" r="3" fill="none" stroke="#c02020"/>`,
            `<rect x="3" y="2" width="18" height="7" fill="#2f8a3a"/>${wave("#a8e8a8")}<path d="M6 13H9M11 13H14M16 13H19" stroke="#444"/>${row}`,
            `<rect x="3" y="3" width="8" height="8" fill="#fff" stroke="#555"/><path d="M4 10L10 4" stroke="#c02020"/><rect x="13" y="3" width="8" height="8" fill="#fff" stroke="#555"/><path d="M14 4L20 10" stroke="#2050c0"/>${row}`,
            `<rect x="3" y="2" width="18" height="11" fill="#fff" stroke="#aaa"/>${wave("#c02020")}<path d="M3 8L7 5L11 9L15 5L20 8" fill="none" stroke="#2050c0"/>${row}`,
            `<rect x="3" y="2" width="18" height="11" fill="#fff" stroke="#aaa"/>${wave("#1a8a3a")}<path d="M3 9L7 6L11 10L15 6L20 9" fill="none" stroke="#c02020"/>${row}`,
            `<rect x="3" y="2" width="15" height="11" fill="#1a6a4a"/>${wave("#bfffbf")}<path d="M20 3V12" stroke="#555" stroke-dasharray="2 2"/>${row}`,
            `<rect x="3" y="2" width="18" height="11" fill="#0a5a2a"/><text x="12" y="11" font-size="9" text-anchor="middle" font-family="Liberation Mono" font-weight="700" fill="#9cf09c">123</text><path d="M6 18H9M11 18H13M15 18H19" stroke="#333"/>`,
            `<rect x="3" y="2" width="18" height="8" fill="#1a7a3a"/><path d="M5 3V9M8 3V9M11 3V9M14 3V9M17 3V9" stroke="#d8f8d8"/>${dots}`,
            `<rect x="3" y="2" width="18" height="15" fill="#b02060"/><path d="M3 7L12 4L21 7" fill="none" stroke="#333"/><rect x="3" y="11" width="18" height="6" fill="#1a6a4a"/><path d="M4 21H20" stroke="#333" stroke-dasharray="2 1"/>`,
            `<rect x="3" y="2" width="18" height="11" fill="#0a6a6a"/><path d="M5 11V5H11V11H17V5" fill="none" stroke="#e8e840"/>${dots}`,
            `<rect x="3" y="2" width="16" height="11" fill="#20509a"/><path d="M5 9L9 4L13 10L17 5" fill="none" stroke="#e83030"/>${row}`,
            `<rect x="3" y="2" width="18" height="9" fill="#0a5a3a"/>${wave("#bfffbf")}${dots}`,
            `<rect x="3" y="2" width="18" height="11" fill="#fff"/><path d="M5 13V6M8 13V3M11 13V7M14 13V4M17 13V8M20 13V5" stroke="#1a8a3a" stroke-width="2"/>${dots}`,
            `<rect x="3" y="2" width="15" height="11" fill="#1a8a3a"/>${wave("#d0ffd0")}<path d="M20 3V12" stroke="#555" stroke-dasharray="2 2"/>${dots}`,
            `<rect x="3" y="2" width="18" height="6" fill="#1a7a3a"/>${ag}`,
            `<path d="M4 4H14V13H4Z" fill="#fff" stroke="#333"/><path d="M4 13L14 4" stroke="#333"/>${ag}`,
            `<rect x="3" y="2" width="18" height="10" fill="#fff"/>${wave("#c02020")}${ag}`,
            `<rect x="3" y="2" width="18" height="10" fill="#fff"/>${wave("#c02020")}<rect x="10" y="15" width="11" height="6" fill="#f2e860"/><path d="M3 18H8" stroke="#2050c0" stroke-width="2"/>`
        ];
        const svg = (inner) => `<svg width="24" height="24" viewBox="0 0 24 24">${inner}</svg>`;
        const ar = `<svg width="6" height="9"><path d="M0 0V9L6 4.500Z" fill="#111"/></svg>`;
        return `<style>
:host { display: flex; flex-direction: column; align-items: center; width: 34px; flex: none; box-sizing: border-box; padding-top: 7px; }
.i { height: 27.5px; display: flex; align-items: center; justify-content: center; flex: none; }
.a { height: 14px; display: flex; align-items: center; flex: none; margin-top: 2px; }
hr { width: 34px; border: 0; border-top: 1px solid #999; margin: 4px 0; flex: none; }
</style>
<hr style="margin:0 0 4px">${I.map(x => `<div class="i">${svg(x)}</div>`).join("")}
<hr style="margin:6px 0 4px">
<div class="i">${svg(`<path d="M4 2H9L10 8H21V18H3Z" fill="#f5ee40" stroke="#999"/><text x="12" y="17" font-size="8.500" text-anchor="middle" font-family="Liberation Sans" font-weight="700" fill="#222">1.4v</text>`)}</div><div class="a">${ar}</div>
<hr>
<div class="i">${svg(`<rect x="3" y="3" width="18" height="18" fill="#2858a8"/><path d="M7 6V18L19 12Z" fill="#f0e040" stroke="#111"/><path d="M0 8H4M0 16H4M20 12H24" stroke="#d02020"/>`)}</div><div class="a">${ar}</div>
<hr>
<div class="i">${svg(`<path d="M3 20C3 8 10 6 15 8L12 15C10 19 7 21 3 20Z" fill="#c01818" stroke="#111"/><path d="M15 8L23 3M14 12L23 10" stroke="#111" stroke-width="1.4"/>`)}</div>`;
    }
}
customElements.define("ms-rightbar", MsRightbar);

class MsTabs extends Base {
    html() {
        return `<style>
:host { display: flex; height: 28px; flex: none; padding-left: 203px; box-sizing: border-box; align-items: flex-start; }
.tab { width: 196px; height: 27px; display: flex; align-items: center; gap: 4px; padding-left: 4px; box-sizing: border-box; font-size: 14.6px; border: 1px solid #999; border-top: 0; border-right: 2px solid #333; border-bottom: 2px solid #333; white-space: nowrap; }
.nav { margin-left: auto; display: flex; margin-right: 37px; height: 23px; margin-top: 5px; }
.nav div { width: 20px; display: flex; align-items: center; justify-content: center; border: 1px solid #ddd; border-right-color: #888; border-bottom-color: #888; box-sizing: border-box; }
</style><div class="tab"><svg width="20" height="22" viewBox="0 0 22 24"><path d="M1 1H15L20 6V23H1Z" fill="#fff" stroke="#111"/><path d="M5 5V13H12M16 11H7V18" fill="none" stroke="#d02020" stroke-width="1.5"/></svg>PA300-3-kvazi-HID ver *</div>
<div class="nav"><div><svg width="6" height="10"><path d="M6 0V10L0 5Z" fill="#2040a0"/></svg></div><div><svg width="6" height="10"><path d="M0 0V10L6 5Z" fill="#2040a0"/></svg></div></div>`;
    }
}
customElements.define("ms-tabs", MsTabs);

class MsStatusbar extends Base {
    html() {
        return `<style>
:host { display: grid; grid-template-columns: 1188px 197px 230px 229px 1fr; height: 27px; flex: none; border-top: 1px solid #d8d8d8; font-size: 14px; box-sizing: border-box; }
div { display: flex; align-items: center; padding-left: 2px; box-sizing: border-box; border-left: 1px solid #aaa; white-space: nowrap; overflow: hidden; }
div:first-child { border: 0; }
.g { gap: 4px; padding-left: 6px; }
.g i { width: 7px; height: 18px; border: 1px solid #aaa; border-bottom: 0; flex: none; box-sizing: border-box; }
</style><div>Database Manager</div><div>-</div><div></div><div>Tran: 1.093 s</div><div class="g"><i></i><i></i><i></i><i></i><i></i><i></i></div>`;
    }
}
customElements.define("ms-statusbar", MsStatusbar);

/* ---------- floating instrument windows ---------- */
class MsWindow extends Base {
    get tb() { return 38; }
    css() { return ""; }
    body() { return ""; }
    html() {
        const a = n => +this.getAttribute(n);
        this.style.left = a("x") + "px";
        this.style.top = a("y") + "px";
        this.style.width = a("w") + "px";
        this.style.height = a("h") + "px";
        return `<style>
:host { position: absolute; display: flex; flex-direction: column; box-sizing: border-box; background: #f0f0f0; border: 1px solid #b4b4b4; box-shadow: 2px 3px 9px rgba(0,0,0,.38); font-size: 13px; color: #222; overflow: hidden; z-index: 2; }
.tb { display: flex; align-items: center; background: #fff; height: ${this.tb}px; flex: none; padding: 0 0 3px 10px; box-sizing: border-box; gap: 5px; font-size: 15px; color: #8b8b8b; white-space: nowrap; }
.x { margin-left: auto; margin-right: 15px; display: flex; }
.grip { position: absolute; right: 2px; bottom: 2px; display: flex; }
${this.css()}
</style>
<div class="tb">${LOGO}<span>${this.getAttribute("name")}</span><span class="x"><svg width="13" height="13"><path d="M.5 .5L12.500 12.500M12.500 .5L.5 12.500" stroke="#666"/></svg></span></div>
${this.body()}
<div class="grip"><svg width="13" height="13" fill="#aaa"><rect x="10" y="1" width="2" height="2"/><rect x="10" y="5" width="2" height="2"/><rect x="10" y="9" width="2" height="2"/><rect x="6" y="5" width="2" height="2"/><rect x="6" y="9" width="2" height="2"/><rect x="2" y="9" width="2" height="2"/></svg></div>`;
    }
}

class MsMultimeter extends MsWindow {
    css() {
        return `
ms-display { height: 40px; }
.fn { display: flex; align-items: center; gap: 11px; margin: 10px 8px 0; height: 34px; padding-left: 14px; border: 1px solid #c4c4c4; box-sizing: border-box; flex: none; }
.cur { display: flex; align-items: center; gap: 15px; margin: 0 0 0 42px; width: 142px; height: 31px; padding-left: 11px; border: 1px solid #c4c4c4; border-top: 0; box-sizing: border-box; flex: none; }
.low { display: flex; justify-content: space-between; align-items: flex-start; padding: 13px 5px 0 9px; }
.low ms-btn { margin-top: 3px; }
.t { display: flex; flex-direction: column; align-items: center; font-size: 16px; line-height: 15px; width: 16px; }
.t.m { padding-top: 4px; }`;
    }
    body() {
        const m = this.getAttribute("mode"), c = this.getAttribute("cur");
        return `<ms-display>${this.getAttribute("value")}</ms-display>
<div class="fn">${btn("A", 37, 26, m == "A")}${btn("V", 36, 26, m == "V")}${btn("Ω", 38, 26)}${btn("dB", 38, 26)}</div>
<div class="cur">${btn(SINE, 54, 20, c == "ac")}${btn(LINE, 52, 20, c == "dc")}</div>
<div class="low"><div class="t">+<ms-term></ms-term></div>${btn("Set...", 90, 23)}<div class="t m">−<ms-term></ms-term></div></div>`;
    }
}
customElements.define("ms-multimeter", MsMultimeter);

class MsWattmeter extends MsWindow {
    css() {
        return `
ms-display { height: 43px; border-top-width: 3px; }
.pf { display: flex; align-items: center; justify-content: space-between; padding: 8px 5px 0 8px; }
.bk { width: 96px; height: 21px; background: #000; color: #ddd; display: flex; align-items: center; justify-content: center; padding-left: 4px; box-sizing: border-box; font-size: 14px; outline: 2px solid #c8c8c8; }
.head { display: flex; justify-content: space-between; padding: 11px 22px 0 17px; }
.terms { display: flex; padding: 8px 0 0 9px; }
.t { display: flex; flex-direction: column; align-items: center; font-size: 16px; line-height: 16px; width: 16px; }
.t:nth-child(2) { margin-left: 29px; }
.t:nth-child(3) { margin-left: 72px; }
.t:nth-child(4) { margin-left: 27px; }`;
    }
    body() {
        return `<ms-display>${this.getAttribute("value")}</ms-display>
<div class="pf"><span>Power Factor:</span><div class="bk">${this.getAttribute("pf")}</div></div>
<div class="head"><span>Voltage</span><span>Current</span></div>
<div class="terms"><div class="t">+<ms-term></ms-term></div><div class="t">−<ms-term></ms-term></div><div class="t">+<ms-term></ms-term></div><div class="t">−<ms-term></ms-term></div></div>`;
    }
}
customElements.define("ms-wattmeter", MsWattmeter);

class MsDistortion extends MsWindow {
    css() {
        return `
.cap { text-align: center; height: 20px; line-height: 20px; flex: none; }
ms-display { height: 44px; }
.mid { display: flex; padding: 6px 6px 0 9px; gap: 10px; }
.ss { display: flex; flex-direction: column; gap: 9px; padding-top: 17px; }
.box { flex: 1; border: 1px solid #c4c4c4; height: 107px; box-sizing: border-box; display: grid; grid-template-columns: 134px 105px 52px; grid-template-rows: 22px 24px 22px; column-gap: 3px; row-gap: 15px; padding: 14px 0 0 1px; }
.box .l { text-align: right; padding-right: 11px; align-self: center; white-space: nowrap; }
.sel { grid-column: 2 / 4; display: flex; align-items: center; justify-content: space-between; height: 24px; width: 159px; padding: 0 1px 0 4px; box-sizing: border-box; background: #fff; border: 2px solid #8f8f8f; border-bottom-color: #e4e4e4; border-right-color: #e4e4e4; }
.sel i { width: 18px; height: 18px; border: 1px solid #ddd; border-right: 2px solid #888; border-bottom: 2px solid #888; box-sizing: border-box; display: flex; align-items: center; justify-content: center; }
.ro { grid-column: 2 / 4; margin-top: -11px; width: 160px; height: 22px; display: flex; align-items: center; justify-content: center; border-left: 1px solid #aaa; border-top: 1px solid #ccc; box-sizing: border-box; }
.low { display: flex; padding: 13px 0 0 6px; }
ms-group { height: 39px; }
.c { width: 234px; display: flex; gap: 4px; padding: 9px 0 0 9px; box-sizing: border-box; }
.d { width: 81px; display: flex; gap: 5px; padding: 9px 0 0 4px; box-sizing: border-box; margin-left: -1px; }
.in { display: flex; align-items: center; gap: 3px; padding: 12px 0 0 21px; font-size: 14px; }`;
    }
    body() {
        return `<div class="cap">Total Harmonic Distortion(THD)</div>
<ms-display>0.427 %</ms-display>
<div class="mid"><div class="ss">${btn("Start", 53, 32)}${btn("Stop", 52, 31, 1)}</div>
<div class="box"><div class="l">Fundamental Freq.</div>${fld("40", 105, 22, "center")}${fld("Hz", 52, 22)}
<div class="l">Resolution Freq.</div><div class="sel">4 Hz<i><svg width="9" height="6"><path d="M0 0H9L4.500 6Z" fill="#111"/></svg></i></div>
<div></div><div class="ro">4 Hz</div></div></div>
<div class="low"><ms-group class="c" label="Controls">${btn("THD", 70, 23, 1)}${btn("SINAD", 71, 23)}${btn("Set...", 71, 23)}</ms-group>
<ms-group class="d" label="Display">${btn("%", 32, 23, 1)}${btn("dB", 33, 23)}</ms-group>
<div class="in">In <ms-term></ms-term></div></div>`;
    }
}
customElements.define("ms-distortion", MsDistortion);

class MsFuncgen extends MsWindow {
    css() {
        return `
.tb { padding-left: 5px; }
ms-group { margin: 9px 8px 0 5px; --leg-x: -1px; }
.w { height: 45px; display: flex; gap: 3px; padding: 12px 0 0 2px; box-sizing: border-box; margin-top: 9px; }
.s { height: 149px; margin-top: 0; border-top: 1px solid #c4c4c4; padding: 11px 0 0 3px; box-sizing: border-box; }
.r { display: grid; grid-template-columns: 79px 92px 52px; column-gap: 3px; align-items: center; height: 24.500px; }
.set { display: flex; margin: 6px 0 0 30px; }
.low { display: flex; justify-content: space-between; padding: 9px 0 0 16px; width: 222px; box-sizing: border-box; }
.t { display: flex; flex-direction: column; align-items: center; font-size: 16px; line-height: 16px; }
.t.c { margin-top: -2px; align-items: flex-start; margin-left: -2px; }
.t.c .n { font-size: 13px; line-height: 16px; margin-bottom: 4px; }
.t.c ms-term { margin-left: 12px; }
`;
    }
    body() {
        const tri = `<svg width="56" height="12" viewBox="0 0 56 12"><path d="M1 9L12 3L22 9L31 3L42 8L52 5" fill="none" stroke="#111" stroke-width="1.2"/></svg>`;
        const sq = `<svg width="56" height="12" viewBox="0 0 56 12"><path d="M1 10H12V2H24V10H35V2H45V10H55" fill="none" stroke="#111" stroke-width="1.2"/></svg>`;
        const sn = `<svg width="56" height="12" viewBox="0 0 56 12"><path d="M1 7C7 1 14 1 20 6S30 11 36 6 48 2 55 6" fill="none" stroke="#111" stroke-width="1.2"/></svg>`;
        const r = (l, v, u, d) => `<div class="r"><span>${l}</span>${fld(v, 92, 22, d ? "off" : "")}${fld(u, 52, 22, d ? "off" : "")}</div>`;
        return `<ms-group class="w" label="Waveforms">${btn(sn, 74, 22, 1)}${btn(tri, 73, 22)}${btn(sq, 74, 22)}</ms-group>
<ms-group class="s" label="Signal Options">${r("Frequency", "40", "Hz")}${r("Duty Cycle", "50", "%", 1)}${r("Amplitude", "1.0369", "Vp")}${r("Offset", "0", "V")}
<div class="set"><ms-btn style="width:155px;height:28px" off>Set Rise/Fall Time</ms-btn></div></ms-group>
<div class="low"><div class="t">+<ms-term></ms-term></div><div class="t c"><span class="n">Common</span><ms-term></ms-term></div><div class="t">−<ms-term empty></ms-term></div></div>`;
    }
}
customElements.define("ms-funcgen", MsFuncgen);

class MsScope extends MsWindow {
    get tb() { return 36; }
    css() {
        return `
.screen { height: 312px; flex: none; box-sizing: border-box; padding: 4px 3px 4px 3px; background: #f0f0f0; border-top: 1px solid #999; border-bottom: 2px solid #999; }
.screen svg { display: block; }
.sb { display: flex; height: 18px; flex: none; align-items: center; }
.sb .a { width: 21px; height: 18px; display: flex; align-items: center; justify-content: center; border-right: 2px solid #999; border-bottom: 2px solid #999; box-sizing: border-box; flex: none; }
.sb .tr { width: 518px; height: 100%; background: #f7f7f7; flex: none; }
.sb .th { flex: 1; height: 100%; background: #e4e4e4; border-bottom: 2px solid #aaa; box-sizing: border-box; }
.read { display: flex; height: 74px; margin-top: 4px; flex: none; }
.ts { width: 67px; box-sizing: border-box; border: 1px solid #c8c8c8; display: grid; grid-template-columns: 22px 19px 19px; grid-template-rows: 23px 23px 1fr; align-items: center; padding: 6px 0 0 3px; flex: none; column-gap: 1px; }
.ts .w { grid-column: 1 / 4; }
.rv { width: 578px; height: 69px; flex: none; margin-left: 2px; background: #fff; border-style: solid; border-width: 2px 1px 1px 2px; border-color: #8f8f8f #f8f8f8 #f8f8f8 #8f8f8f; box-sizing: border-box; display: grid; grid-template-columns: 92px repeat(4, 100px); grid-template-rows: 16px 16px; padding: 3px 0 0 0; line-height: 16px; text-align: center; white-space: nowrap; }
.rv span:nth-child(5n+1) { padding-right: 8px; }
.rgt { margin-left: 9px; width: 66px; display: flex; flex-direction: column; gap: 3px; align-items: center; flex: none; }
.gnd { display: flex; gap: 4px; align-items: center; height: 22px; }
.groups { display: flex; padding: 9px 2px 0 2px; height: 103px; flex: none; box-sizing: content-box; }
ms-group { height: 103px; border-right: 0; --leg-x: 4px; }
.tbase { width: 182px; padding: 12px 0 0 5px; box-sizing: border-box; }
.cha { width: 293px; padding: 10px 0 0 8px; box-sizing: border-box; }
.trg { width: 248px; padding: 11px 0 0 8px; box-sizing: border-box; border-right: 1px solid #c0c0c0; }
.row { display: flex; align-items: center; }
.fit { display: flex; gap: 2px; margin-left: -3px; }
.kn { display: grid; grid-template-columns: 18px 48px 18px; grid-template-rows: 11px 48px 11px; justify-items: center; align-items: center; }
.kn svg { grid-area: 2 / 2; }
.cols { display: flex; }
.term4 { display: flex; gap: 21px; padding-left: 32px; align-items: center; }
`;
    }
    plot() {
        const xs = [];
        for (let x = 626; x <= 1300; x += 1) xs.push(x);
        const wave = (amp, ph, sign = 1) => xs.map(x => `${x},${(614 - sign * amp * Math.cos(2 * Math.PI * (x - ph) / 87.6)).toFixed(1)}`).join(" ");
        let g = "";
        for (let i = 1; i <= 9; i++) {
            const x = 625.6 + i * 70.05;
            g += `<path d="M${x} 471V758" stroke="#ddd" stroke-dasharray="3 3"/>`;
        }
        for (const y of [519, 566, 663, 710]) g += `<path d="M626 ${y}H1326" stroke="#ddd" stroke-dasharray="3 3"/>`;
        let ticks = "";
        for (let x = 634; x < 1326; x += 7) ticks += `M${x} 614v${x % 3 == 0 ? 3 : 2}`;
        return `<svg width="719" height="306" viewBox="615 461 719 306">
<rect x="615" y="461" width="719" height="306" fill="#000"/>${g}
<path d="M626 471H1326" stroke="#e4e4e4" stroke-width="1.4"/><path d="M626 758H1326" stroke="#999" stroke-width="1.4"/>
<path d="M626 471V758" stroke="#d41e1e" stroke-width="1"/><path d="M1326 471V758" stroke="#1a1aa0" stroke-width="1"/>
<path d="M626 614H1326" stroke="#f2f2f2" stroke-width="1.6"/><path d="${ticks}" stroke="#ddd"/>
<polyline points="${wave(121.7, 639.3)}" fill="none" stroke="#8f8fd0" stroke-width="1.400"/>
<polyline points="${wave(13.3, 642.7)}" fill="none" stroke="#e6a61a" stroke-width="1.700"/>
<polyline points="${wave(13.3, 642.7, -1)}" fill="none" stroke="#d4101e" stroke-width="1.700"/>
<path d="M619 463H633L626 472Z" fill="#22d8e0"/><path d="M1319 463H1333L1326 472Z" fill="#e8e820"/>
</svg>`;
    }
    body() {
        const L = `<svg width="11" height="11"><path d="M1 5.500L6 1V4H10V7H6V10Z" fill="#111"/></svg>`;
        const R = `<svg width="11" height="11"><path d="M10 5.500L5 1V4H1V7H5V10Z" fill="#111"/></svg>`;
        const up = `<svg width="14" height="12"><path d="M2 10H6V2H12" fill="none" stroke="#111" stroke-width="1.2"/><path d="M4 6L6 3L8 6" fill="#111"/></svg>`;
        const dn = `<svg width="14" height="12"><path d="M2 2H6V10H12" fill="none" stroke="#111" stroke-width="1.2"/><path d="M4 6L6 9L8 6" fill="#111"/></svg>`;
        const knob = `<svg width="48" height="48" viewBox="0 0 50 50"><defs><radialGradient id="kg" cx=".45" cy=".3" r=".8"><stop offset="0" stop-color="#e8e8e8"/><stop offset=".55" stop-color="#a8a8a8"/><stop offset="1" stop-color="#444"/></radialGradient></defs><circle cx="25" cy="25" r="22" fill="url(#kg)"/><circle cx="25" cy="25" r="8" fill="#c8c8c8" stroke="#777" stroke-width="2"/><path d="M25 5V22" stroke="#666" stroke-width="1.5"/><path d="M10 42A20 20 0 0 0 40 42" fill="none" stroke="#222" stroke-width="3"/></svg>`;
        const rv = ["Time", "Channel_A", "Channel_B", "Channel_C", "Channel_D", "900.020 ms", "27.883 V", "358.704 mV", "-333.367 mV", ""].map(t => `<span>${t}</span>`).join("");
        return `<div class="screen">${this.plot()}</div>
<div class="sb"><div class="a"><svg width="6" height="9"><path d="M6 0V9L0 4.500Z" fill="#111"/></svg></div><div class="tr"></div><div class="th"></div><div class="a"><svg width="6" height="9"><path d="M0 0V9L6 4.500Z" fill="#111"/></svg></div></div>
<div class="read">
<div class="ts"><span>T1</span>${btn(L, 18, 22)}${btn(R, 18, 22)}<span>T2</span>${btn(L, 18, 22)}${btn(R, 18, 22)}<span class="w">T2-T1</span></div>
<div class="rv">${rv}</div>
<div class="rgt">${btn("Reverse", 66, 22)}${btn("Save", 66, 23)}<div class="gnd">GND <ms-term empty></ms-term></div></div>
</div>
<div class="groups">
<ms-group class="tbase" label="Timebase">
<div class="row"><span style="width:44px">Scale</span>${fld("20 ms/Div", 128, 23)}</div>
<div class="row" style="margin-top:2px"><span style="width:74px">X position</span>${fld("0", 98, 23)}</div>
<div class="row fit" style="margin-top:14px">${btn("Y/T", 32, 21, 1)}${btn("A/B", 33, 21)}${btn("A+B", 37, 21)}</div>
</ms-group>
<ms-group class="cha" label="Channel_A">
<div class="cols"><div style="width:185px">
<div class="row" style="margin-top:2px"><span style="width:60px">Scale</span>${fld("20&nbsp; V/Div", 125, 22)}</div>
<div class="row" style="margin-top:1px"><span style="width:87px">Y position</span>${fld("0", 98, 22)}</div></div>
<div class="kn" style="margin:-8px 0 0 6px"><span style="grid-area:1/2">A</span><span style="grid-area:2/1">D</span>${knob}<span style="grid-area:2/3">B</span><span style="grid-area:3/2">C</span></div></div>
<div class="row" style="margin-top:6px">${btn("AC", 28, 21, 1)}<span style="width:4px"></span>${btn("0", 28, 21)}<span style="width:3px"></span>${btn("DC", 30, 21)}<span style="width:2px"></span>${btn("-", 22, 21)}
<div class="term4" style="margin-top:-4px"><ms-term></ms-term><ms-term></ms-term><ms-term></ms-term><ms-term empty></ms-term></div></div>
</ms-group>
<ms-group class="trg" label="Trigger">
<div class="row"><span style="width:71px;padding-left:7px;box-sizing:border-box">Edge</span>${btn(up, 32, 19, 1)}<span style="width:6px"></span>${btn(dn, 32, 19)}<span style="margin-left:23px">Ext</span><span style="width:6px"></span><ms-term empty></ms-term></div>
<div class="row" style="margin-top:6px"><span style="width:71px;padding-left:7px;box-sizing:border-box">Level</span>${fld("0", 118, 23)}<span style="width:3px"></span>${fld("V", 38, 23)}</div>
<div class="row" style="margin-top:17px">${btn("Sing.", 39, 21)}<span style="width:2px"></span>${btn("Nor.", 37, 21)}<span style="width:3px"></span>${btn("Auto", 40, 21)}<span style="width:1px"></span>${btn("None", 39, 21, 1)}<span style="width:11px"></span><ms-btn style="width:29px;height:21px" off pressed>A</ms-btn><span style="width:2px"></span><ms-btn style="width:29px;height:21px" off>Ext</ms-btn></div>
</ms-group>
</div>`;
    }
}
customElements.define("ms-scope", MsScope);
</script>
</body>
</html>
